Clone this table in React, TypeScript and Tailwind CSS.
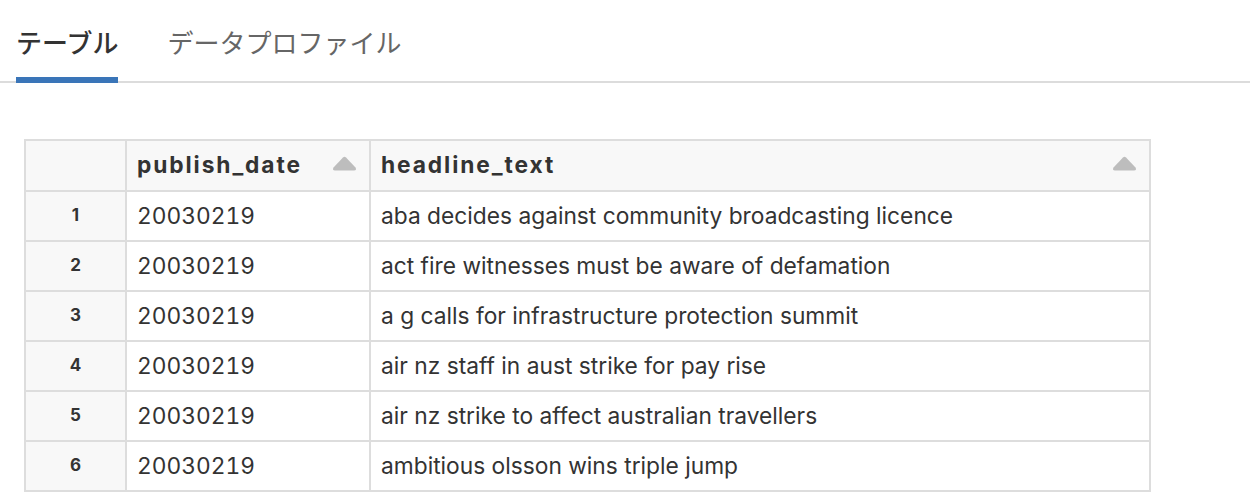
const rows = [
  { i: 1, date: '20030219', text: 'aba decides against community broadcasting licence' },
  { i: 2, date: '20030219', text: 'act fire witnesses must be aware of defamation' },
  { i: 3, date: '20030219', text: 'a g calls for infrastructure protection summit' },
  { i: 4, date: '20030219', text: 'air nz staff in aust strike for pay rise' },
  { i: 5, date: '20030219', text: 'air nz strike to affect australian travellers' },
  { i: 6, date: '20030219', text: 'ambitious olsson wins triple jump' },
]

function SortIcon() {
  return (
    <svg width="25" height="15" viewBox="0 0 25 15" className="absolute right-[12px] top-[15px]">
      <path
        d="M11 1.5 Q12.5 0 14 1.5 L23.5 11.5 Q25 14.5 22 14.5 L3 14.5 Q0 14.5 1.5 11.5 Z"
        fill="#bdbdbd"
      />
    </svg>
  )
}

export default function App() {
  return (
    <div
      className="bg-white w-[1250px] h-[502px] text-[#333]"
      style={{ fontFamily: 'Inter, "Noto Sans CJK JP", sans-serif' }}
    >
      <div className="pt-[29px] pl-[16px] flex border-b-2 border-[#dcdcdc]">
        <div className="relative h-[52px] text-[26px] leading-[30px] text-[#333] font-medium">
          テーブル
          <div className="absolute left-0 right-0 bottom-[-2px] h-[6px] bg-[#3a75b8]" />
        </div>
        <div className="ml-[49px] h-[52px] text-[26px] leading-[30px] text-[#666]">
          データプロファイル
        </div>
      </div>

      <table className="ml-[24px] mt-[56px] border-collapse text-[22.75px]">
        <thead>
          <tr className="h-[51px] bg-[#f8f8f8]">
            <th className="w-[101px] border-2 border-[#dddddd]" />
            <th className="relative w-[244px] border-2 border-[#dddddd] px-[10px] text-left font-bold tracking-[1.9px]">
              publish_date
              <SortIcon />
            </th>
            <th className="relative w-[780px] border-2 border-[#dddddd] px-[10px] text-left font-bold tracking-[1.9px]">
              headline_text
              <SortIcon />
            </th>
          </tr>
        </thead>
        <tbody>
          {rows.map((r) => (
            <tr key={r.i} className="h-[50px]">
              <td className="border-2 border-[#dddddd] bg-[#f8f8f8] text-center text-[17px] font-bold">
                {r.i}
              </td>
              <td className="border-2 border-[#dddddd] px-[10px] tabular-nums">{r.date}</td>
              <td className="border-2 border-[#dddddd] px-[10px]">{r.text}</td>
            </tr>
          ))}
        </tbody>
      </table>
    </div>
  )
}
